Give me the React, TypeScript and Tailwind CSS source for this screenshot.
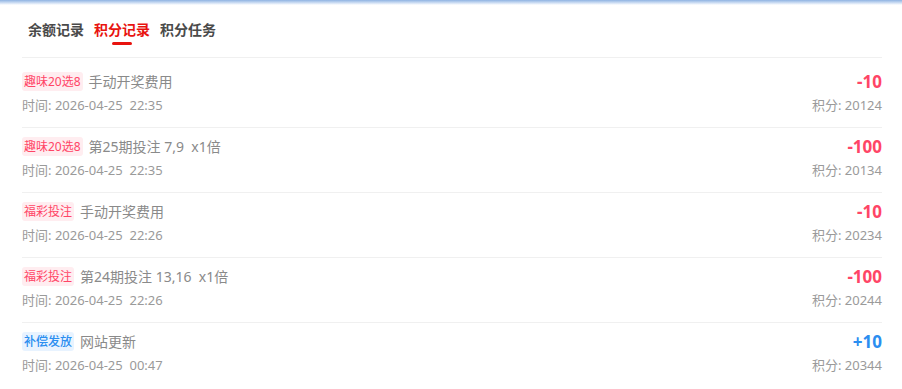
const font = { fontFamily: '"Noto Sans", "Noto Sans CJK SC", sans-serif' };

type Rec = {
  tag: string;
  kind: 'red' | 'blue';
  title: string;
  time: string;
  amount: string;
  balance: string;
};

const records: Rec[] = [
  { tag: '趣味20选8', kind: 'red', title: '手动开奖费用', time: '2026-04-25 22:35', amount: '-10', balance: '20124' },
  { tag: '趣味20选8', kind: 'red', title: '第25期投注 7,9 x1倍', time: '2026-04-25 22:35', amount: '-100', balance: '20134' },
  { tag: '福彩投注', kind: 'red', title: '手动开奖费用', time: '2026-04-25 22:26', amount: '-10', balance: '20234' },
  { tag: '福彩投注', kind: 'red', title: '第24期投注 13,16 x1倍', time: '2026-04-25 22:26', amount: '-100', balance: '20244' },
  { tag: '补偿发放', kind: 'blue', title: '网站更新', time: '2026-04-25 00:47', amount: '+10', balance: '20344' },
];

const tabs = ['余额记录', '积分记录', '积分任务'];

function Row({ r, last }: { r: Rec; last: boolean }) {
  const red = r.kind === 'red';
  return (
    <div className={`flex justify-between pt-[9px] pb-[11px] ${last ? '' : 'border-b border-[#f0f0f0]'}`}>
      <div className="flex flex-col gap-[4px]">
        <div className="flex h-[20px] items-center gap-[6px]">
          <span
            className={`h-[19px] rounded-[3px] px-[2px] text-[12px] leading-[19px] ${
              red ? 'bg-[#ffedf0] text-[#ff4566]' : 'bg-[#e8f3ff] font-medium text-[#2b8ef0]'
            }`}
          >
            {r.tag}
          </span>
          <span className="whitespace-pre text-[14px] text-[#8a8a8a]">{r.title.replace(/ x/, '  x')}</span>
        </div>
        <div className="flex h-[20px] items-center whitespace-pre text-[13px] text-[#9a9a9a]">
          时间: {r.time.replace(' ', '  ')}
        </div>
      </div>
      <div className="flex flex-col items-end gap-[4px]">
        <div
          className={`flex h-[20px] items-center text-[17px] font-bold ${red ? 'text-[#ff4566]' : 'text-[#2b8ef0]'}`}
        >
          {r.amount}
        </div>
        <div className="flex h-[20px] items-center text-[13px] text-[#9a9a9a]">积分: {r.balance}</div>
      </div>
    </div>
  );
}

export default function App() {
  return (
    <div className="h-[389px] w-[902px] overflow-hidden bg-white" style={font}>
      <div className="h-[5px] bg-gradient-to-b from-[#8fb3e2] to-white" />
      <div className="px-[22px] pr-[20px] pt-[15px]">
        <div className="flex gap-[10px] border-b border-[#f0f0f0] pb-[12px] pl-[6px]">
          {tabs.map((t, i) => (
            <div key={t} className="flex flex-col items-center">
              <span
                className={`text-[14px] font-bold leading-[20px] ${i === 1 ? 'text-[#e8130f]' : 'text-[#4a4a4a]'}`}
              >
                {t}
              </span>
              <span className={`mt-[2px] h-[2.5px] w-[20px] rounded-full ${i === 1 ? 'bg-[#e8130f]' : 'bg-transparent'}`} />
            </div>
          ))}
        </div>
        <div className="pt-[5px]">
          {records.map((r, i) => (
            <Row key={i} r={r} last={i === records.length - 1} />
          ))}
        </div>
      </div>
    </div>
  );
}
